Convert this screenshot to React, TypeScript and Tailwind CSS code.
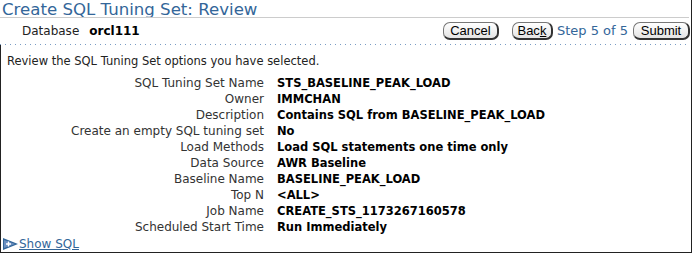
import React from "react";

const rows: [string, string][] = [
  ["SQL Tuning Set Name", "STS_BASELINE_PEAK_LOAD"],
  ["Owner", "IMMCHAN"],
  ["Description", "Contains SQL from BASELINE_PEAK_LOAD"],
  ["Create an empty SQL tuning set", "No"],
  ["Load Methods", "Load SQL statements one time only"],
  ["Data Source", "AWR Baseline"],
  ["Baseline Name", "BASELINE_PEAK_LOAD"],
  ["Top N", "<ALL>"],
  ["Job Name", "CREATE_STS_1173267160578"],
  ["Scheduled Start Time", "Run Immediately"],
];

function Btn({ children, w }: { children: React.ReactNode; w: string }) {
  return (
    <button
      className={`${w} h-[18px] flex items-center justify-center rounded-[7px] border border-[#777] border-r-2 border-b-2 border-r-[#333] border-b-[#333] bg-[linear-gradient(#ffffff,#e4e4e4)] font-['Liberation_Sans',sans-serif] text-[13px] leading-[14px] text-black`}
    >
      {children}
    </button>
  );
}

export default function App() {
  return (
    <div className="w-[694px] h-[254px] bg-white overflow-hidden font-['DejaVu_Sans',sans-serif]">
      <div className="w-[692px] h-[253px] border-r border-b border-[#222] flex flex-col">
        <div className="h-[17px] pl-[2px] text-[16.6px] leading-[20px] text-[#336699] whitespace-nowrap">
          Create SQL Tuning Set: Review
        </div>
        <div className="h-px bg-[#cccccc] mr-[2px]" />
        <div className="flex items-center h-[26px] pr-[1px]">
          <span className="ml-[22px] text-[12px] text-[#222]">Database</span>
          <span className="ml-[10px] text-[12px] font-bold text-black">orcl111</span>
          <div className="ml-auto flex items-center">
            <Btn w="w-[56px]">Cancel</Btn>
            <div className="w-[13px]" />
            <Btn w="w-[41px]">
              Bac<span className="underline">k</span>
            </Btn>
            <span className="ml-[4px] mr-[5px] text-[13px] text-[#336699]">Step 5 of 5</span>
            <Btn w="w-[57px]">Submit</Btn>
          </div>
        </div>
        <div className="h-px mr-[2px] bg-[repeating-linear-gradient(to_right,#7a9cc4_0_1px,transparent_1px_5px)]" />
        <div className="flex-1 border-l border-[#222] pt-[8px] text-[12px] leading-[16px]">
          <div className="pl-[6px] text-[#222] text-[11.5px]">Review the SQL Tuning Set options you have selected.</div>
          <div className="mt-[6px] grid grid-cols-[263px_1fr] gap-x-[13px]">
            {rows.map(([l, v]) => (
              <React.Fragment key={l}>
                <div className="text-right text-[#333]">{l}</div>
                <div className="font-bold text-black text-[11.5px]">{v}</div>
              </React.Fragment>
            ))}
          </div>
          <div className="mt-[1px] flex items-center pl-[2px]">
            <svg width="15" height="12" viewBox="0 0 15 12">
              <path d="M0 0 L15 6 L0 12 Z" fill="#336699" />
              <path d="M1 2 L12 6 L1 10 Z" fill="#6b8fc0" />
              <path d="M3 6 H8 M5.5 3.5 V8.5" stroke="#fff" strokeWidth="1.4" />
            </svg>
            <a className="ml-[1px] text-[#336699] underline">Show SQL</a>
          </div>
        </div>
      </div>
    </div>
  );
}
